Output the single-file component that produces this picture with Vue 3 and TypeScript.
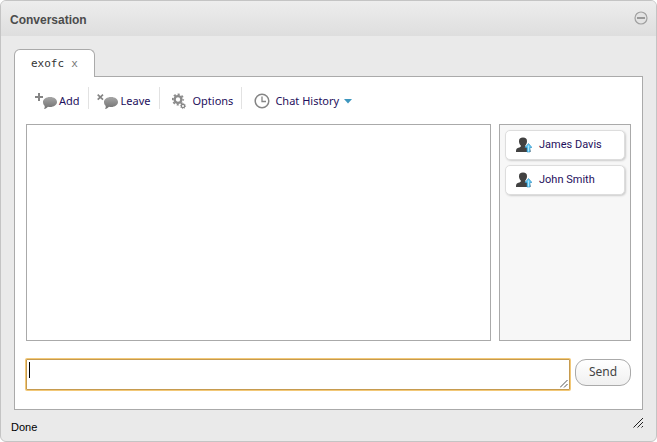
<script setup lang="ts">
import { ref } from 'vue'

interface Member {
  id: string
  name: string
}

const members = ref<Member[]>([
  { id: 'james', name: 'James Davis' },
  { id: 'john', name: 'John Smith' },
])
const draft = ref('')
</script>

<template>
  <section class="window">
    <header class="titlebar">
      <h1>Conversation</h1>
      <button class="minimize" type="button" aria-label="Minimize">
        <svg width="14" height="14" viewBox="0 0 14 14">
          <circle cx="7" cy="7" r="6" fill="#e3e3e3" stroke="#a0a0a0" stroke-width="1.2" />
          <rect x="3" y="6" width="8" height="2" fill="#999" />
        </svg>
      </button>
    </header>

    <main class="body">
      <div class="tab">
        <span>exofc</span>
        <button class="close" type="button" aria-label="Close tab">x</button>
      </div>

      <div class="panel">
        <nav class="toolbar">
          <a href="#" class="tool">
            <svg width="24" height="18" viewBox="0 0 24 18">
              <defs>
                <linearGradient id="bubble-add" x1="0" y1="0" x2="0" y2="1">
                  <stop offset="0" stop-color="#a6a6a6" />
                  <stop offset="1" stop-color="#707070" />
                </linearGradient>
              </defs>
              <path d="M4 1v8M0 5h8" stroke="#858585" stroke-width="2" fill="none" />
              <path d="M15 5c4.300 0 7 2.200 7 5s-3 5-7 5c-.8 0-1.500-.1-2-.2-1.200 1.300-2.300 2-4 2.200.7-.9.9-2 .6-3.200C8.400 12.900 8 11.500 8 10c0-2.800 3-5 7-5z" fill="url(#bubble-add)" />
            </svg>
            <span>Add</span>
          </a>
          <a href="#" class="tool tool-leave">
            <svg width="24" height="18" viewBox="0 0 24 18">
              <defs>
                <linearGradient id="bubble-leave" x1="0" y1="0" x2="0" y2="1">
                  <stop offset="0" stop-color="#a6a6a6" />
                  <stop offset="1" stop-color="#707070" />
                </linearGradient>
              </defs>
              <path d="M.7 2.700l5.300 5M6 2.700l-5.300 5" stroke="#858585" stroke-width="1.700" fill="none" />
              <path d="M14 5c4.300 0 7 2.200 7 5s-3 5-7 5c-.8 0-1.500-.1-2-.2-1.200 1.300-2.300 2-4 2.200.7-.9.9-2 .6-3.200C7.400 12.900 7 11.500 7 10c0-2.800 3-5 7-5z" fill="url(#bubble-leave)" />
            </svg>
            <span>Leave</span>
          </a>
          <a href="#" class="tool tool-options">
            <svg width="15" height="18" viewBox="0 0 15 18">
              <circle cx="6" cy="7.500" r="3.400" fill="none" stroke="#8b8b8b" stroke-width="2.400" />
              <circle cx="6" cy="7.500" r="5.200" fill="none" stroke="#8b8b8b" stroke-width="1.800" stroke-dasharray="2.100 1.984" stroke-dashoffset="1" />
              <circle cx="11" cy="14" r="1.700" fill="#fff" stroke="#858585" stroke-width="1.300" />
              <circle cx="11" cy="14" r="2.600" fill="none" stroke="#858585" stroke-width=".8" stroke-dasharray="1 1.042" />
            </svg>
            <span>Options</span>
          </a>
          <a href="#" class="tool tool-history">
            <svg width="16" height="16" viewBox="0 0 16 16">
              <circle cx="8" cy="8" r="6.800" fill="#fff" stroke="#858585" stroke-width="1.500" />
              <path d="M8 3.500V8.500h4" fill="none" stroke="#858585" stroke-width="1.300" />
            </svg>
            <span>Chat History</span>
            <svg class="arrow" width="8" height="5" viewBox="0 0 8 5">
              <path d="M0 0h8L4 4.500z" fill="#3d96be" />
            </svg>
          </a>
        </nav>

        <div class="conversation">
          <div class="messages" role="log" aria-label="Messages"></div>
          <ul class="members">
            <li v-for="member in members" :key="member.id">
              <a href="#" class="member">
                <svg width="16" height="16" viewBox="0 0 16 16">
                  <path d="M7 .5C9.700.5 11.100 1.800 11 4.200c-.1 2-.7 3.400-1.700 4.300v1c.7.900 2.300 1.100 3.900 1.900 1 .5 1.300 1.500 1.300 3.600H0c0-2.300.3-3.200 1.300-3.700 1.600-.8 2.900-.9 3.500-1.800v-1C3.700 7.600 3.100 6.200 3 4.200 2.900 1.800 4.300.5 7 .5z" fill="#414141" />
                  <path d="M12.500 6.500L16 10.500h-2V15h-3v-4.500H9z" fill="#62caf5" stroke="#2b8fc4" stroke-width=".6" />
                  <path d="M12.500 8.500v6" stroke="#b2e7fc" stroke-width="1" />
                </svg>
                <span>{{ member.name }}</span>
              </a>
            </li>
          </ul>
        </div>

        <form class="composer" @submit.prevent="draft = ''">
          <div class="field">
            <textarea v-model="draft" rows="1" aria-label="Message"></textarea>
            <i v-if="!draft" class="caret"></i>
            <svg class="grip" width="8" height="8" viewBox="0 0 8 8">
              <path d="M0 7.500L7.500 0M4 7.500L7.500 4" stroke="#555" stroke-width="1" />
            </svg>
          </div>
          <button class="send" type="submit">Send</button>
        </form>
      </div>
    </main>

    <footer class="status">
      <span>Done</span>
      <svg width="11" height="10" viewBox="0 0 11 10">
        <path d="M.5 9.500L10 0M4.500 9.500L10 4M8.500 9.500L10 8" stroke="#222" stroke-width="1" />
      </svg>
    </footer>
  </section>
</template>

<style>
body {
  background: #fff;
}
</style>

<style scoped>
* {
  box-sizing: border-box;
}

button {
  font: inherit;
  cursor: pointer;
}

svg {
  display: block;
  flex: none;
}

.window {
  display: flex;
  flex-direction: column;
  min-height: 100vh;
  border: 1px solid #c4c4c4;
  border-radius: 6px;
  background: #eaeaea;
  overflow: hidden;
  font: 11px/16px "Noto Sans", sans-serif;
}

.titlebar {
  display: flex;
  align-items: center;
  justify-content: space-between;
  height: 35px;
  padding: 0 8px 0 9px;
  background: linear-gradient(#ededed, #dedede);
}

h1 {
  margin: 2px 0 0;
  font: bold 12px/16px "Liberation Sans", sans-serif;
  color: #4c4c4c;
}

.minimize {
  padding: 0 0 2px;
  border: 0;
  background: none;
}

.body {
  display: flex;
  flex-direction: column;
  flex: 1;
  padding: 13px 13px 0;
}

.tab {
  display: flex;
  align-items: center;
  align-self: flex-start;
  gap: 7px;
  height: 28px;
  margin-bottom: -1px;
  padding: 0 16px;
  border: 1px solid #aaa;
  border-bottom: 0;
  border-radius: 6px 6px 0 0;
  background: #fff;
  color: #333;
  font: 11px/16px "DejaVu Sans Mono", monospace;
  z-index: 1;
}

.close {
  padding: 0;
  border: 0;
  background: none;
  color: #777;
}

.panel {
  display: flex;
  flex-direction: column;
  flex: 1;
  padding: 10px 11px 19px;
  border: 1px solid #aaa;
  background: #fff;
}

.toolbar {
  display: flex;
  height: 22px;
  margin-left: 9px;
}

.tool {
  display: flex;
  align-items: center;
  padding-right: 8px;
  border-right: 1px solid #e2e2e2;
  color: #1e0f5c;
  font-size: 11px;
  line-height: 16px;
  text-decoration: none;
}

.tool span {
  padding-top: 5px;
}

.tool > svg {
  margin-top: 6px;
}

.tool-leave {
  padding-left: 8px;
}

.tool-options {
  gap: 6px;
  padding-left: 12px;
}

.tool-history {
  gap: 5px;
  padding-left: 12px;
  border: 0;
}

.conversation {
  display: flex;
  flex: 1;
  gap: 8px;
  margin-top: 15px;
}

.messages {
  flex: 1;
  border: 1px solid #aaa;
}

.members {
  width: 132px;
  margin: 0;
  padding: 5px;
  border: 1px solid #aaa;
  background: #f7f7f7;
  list-style: none;
}

.members li + li {
  margin-top: 5px;
}

.member {
  display: flex;
  align-items: center;
  gap: 7px;
  height: 30px;
  padding: 0 10px;
  border: 1px solid #ddd;
  border-radius: 5px;
  background: #fff;
  box-shadow: 1px 1px 2px #ccc;
  color: #1e0f5c;
  font: 11px/16px Roboto, sans-serif;
  text-decoration: none;
}

.composer {
  display: flex;
  align-items: flex-start;
  gap: 5px;
  margin-top: 18px;
}

.field {
  position: relative;
  flex: 1;
}

textarea {
  display: block;
  width: 100%;
  height: 31px;
  padding: 3px;
  border: 1px solid #c69b4f;
  border-radius: 1px;
  outline: 0;
  box-shadow: 0 0 0 1px #f2c877;
  background: #fff;
  caret-color: transparent;
  font: 11px/16px "Noto Sans", sans-serif;
  resize: none;
}

.caret {
  position: absolute;
  top: 3px;
  left: 3px;
  width: 1px;
  height: 16px;
  background: #000;
}

.grip {
  position: absolute;
  right: 2px;
  bottom: 2px;
}

.send {
  width: 56px;
  height: 27px;
  padding: 0 0 2px;
  border: 1px solid #aaa;
  border-radius: 11px;
  background: linear-gradient(#fff, #f0f0f0);
  color: #444;
  font: 12px/16px "Noto Sans", sans-serif;
}

.status {
  display: flex;
  align-items: center;
  justify-content: space-between;
  height: 31px;
  padding: 2px 12px 0 10px;
  color: #000;
  font: 11px/16px "Liberation Sans", sans-serif;
}

.status svg {
  margin-bottom: 8px;
}
</style>
